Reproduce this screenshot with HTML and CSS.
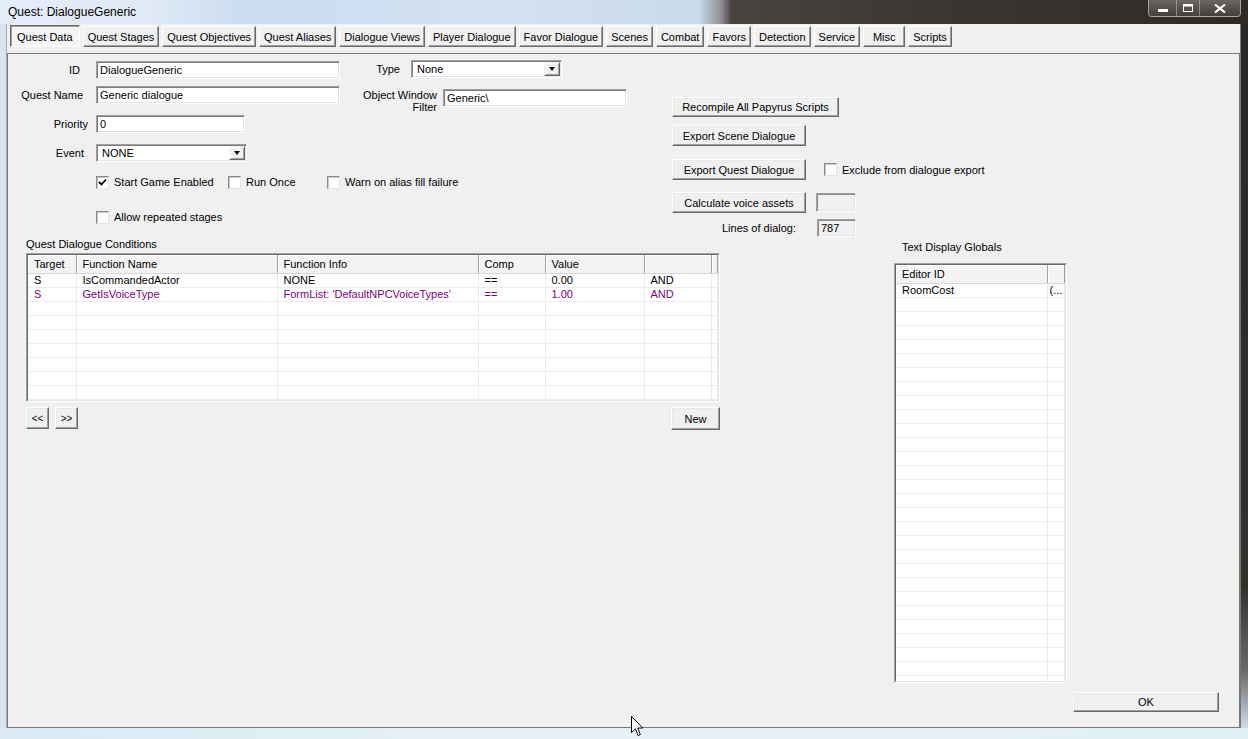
FILE: index.html
```html
<!DOCTYPE html>
<html>
    <head>
        <meta charset="utf-8">
        <link rel="stylesheet" href="styles.css">
    </head>

    <body>
        <div class="window">
            <div class="titlebar">
                <span class="title">Quest: DialogueGeneric</span>
                <div class="caption">
                    <span class="cap cap-min"><svg width="10" height="3"><rect width="10" height="3" fill="#fff"/></svg></span>
                    <span class="cap cap-max"><svg width="10" height="8"><rect x="0.5" y="0.5" width="9" height="7" fill="none" stroke="#fff"/><rect x="0.5" y="0.5" width="9" height="2" fill="#fff"/></svg></span>
                    <span class="cap cap-close"><svg width="12" height="9"><path d="M1 0.5 L11 8.5 M11 0.5 L1 8.5" stroke="#fff" stroke-width="2.2"/></svg></span>
                </div>
            </div>

            <div class="main">
                <div class="edge-left"></div>

                <div class="client">
                    <div class="tabs">
                        <span class="tab selected">Quest Data</span>
                        <span class="tab">Quest Stages</span>
                        <span class="tab">Quest Objectives</span>
                        <span class="tab">Quest Aliases</span>
                        <span class="tab">Dialogue Views</span>
                        <span class="tab">Player Dialogue</span>
                        <span class="tab">Favor Dialogue</span>
                        <span class="tab">Scenes</span>
                        <span class="tab">Combat</span>
                        <span class="tab">Favors</span>
                        <span class="tab">Detection</span>
                        <span class="tab">Service</span>
                        <span class="tab">Misc</span>
                        <span class="tab">Scripts</span>
                    </div>

                    <div class="panel">
                        <div class="top">
                            <div class="form">
                                <div class="fields">
                                    <div class="col-main">
                                        <div class="field">
                                            <span class="lbl lbl-id">ID</span>
                                            <span class="edit w-long">DialogueGeneric</span>
                                        </div>
                                        <div class="field f-name">
                                            <span class="lbl lbl-name">Quest Name</span>
                                            <span class="edit w-long">Generic dialogue</span>
                                        </div>
                                        <div class="field f-gap">
                                            <span class="lbl lbl-priority">Priority</span>
                                            <span class="edit w-short">0</span>
                                        </div>
                                        <div class="field f-gap">
                                            <span class="lbl">Event</span>
                                            <span class="edit combo w-combo"><span class="combo-text">NONE</span><span class="drop"></span></span>
                                        </div>
                                    </div>

                                    <div class="col-side">
                                        <div class="field">
                                            <span class="lbl lbl-type">Type</span>
                                            <span class="edit combo w-combo"><span class="combo-text">None</span><span class="drop"></span></span>
                                        </div>
                                        <div class="field f-filter">
                                            <span class="lbl lbl-filter">Object Window<br>Filter</span>
                                            <span class="edit w-filter">Generic\</span>
                                        </div>
                                    </div>
                                </div>

                                <div class="checks checks-first">
                                    <span class="check check-a"><span class="box"><svg width="11" height="11"><path d="M2 5 L4.5 7.5 L9 2.5" fill="none" stroke="#000" stroke-width="1.8"/></svg></span>Start Game Enabled</span>
                                    <span class="check check-b"><span class="box"></span>Run Once</span>
                                    <span class="check"><span class="box"></span>Warn on alias fill failure</span>
                                </div>
                                <div class="checks checks-second">
                                    <span class="check"><span class="box"></span>Allow repeated stages</span>
                                </div>
                            </div>

                            <div class="actions">
                                <span class="btn b-recompile">Recompile All Papyrus Scripts</span>
                                <div class="act-row act-scene">
                                    <span class="btn b-export">Export Scene Dialogue</span>
                                </div>
                                <div class="act-row act-quest">
                                    <span class="btn b-export">Export Quest Dialogue</span>
                                    <span class="check check-exclude"><span class="box"></span>Exclude from dialogue export</span>
                                </div>
                                <div class="act-row act-calc">
                                    <span class="btn b-export">Calculate voice assets</span>
                                    <span class="readonly ro-calc"></span>
                                </div>
                                <div class="act-row act-lines">
                                    <span class="lines-label">Lines of dialog:</span>
                                    <span class="readonly ro-lines">787</span>
                                </div>
                            </div>
                        </div>

                        <div class="bottom">
                            <div class="conditions">
                                <div class="cond-label">Quest Dialogue Conditions</div>
                                <div class="list cond-list">
                                    <div class="list-inner">
                                        <table class="grid">
                                            <colgroup>
                                                <col class="c-target"><col class="c-name"><col class="c-info"><col class="c-comp"><col class="c-value"><col class="c-op"><col>
                                            </colgroup>
                                            <tr>
                                                <th>Target</th><th>Function Name</th><th>Function Info</th><th>Comp</th><th>Value</th><th></th><th></th>
                                            </tr>
                                            <tr>
                                                <td>S</td><td>IsCommandedActor</td><td>NONE</td><td>==</td><td>0.00</td><td>AND</td><td></td>
                                            </tr>
                                            <tr class="flagged">
                                                <td>S</td><td>GetIsVoiceType</td><td>FormList: 'DefaultNPCVoiceTypes'</td><td>==</td><td>1.00</td><td>AND</td><td></td>
                                            </tr>
                                            <tr><td></td><td></td><td></td><td></td><td></td><td></td><td></td></tr>
                                            <tr><td></td><td></td><td></td><td></td><td></td><td></td><td></td></tr>
                                            <tr><td></td><td></td><td></td><td></td><td></td><td></td><td></td></tr>
                                            <tr><td></td><td></td><td></td><td></td><td></td><td></td><td></td></tr>
                                            <tr><td></td><td></td><td></td><td></td><td></td><td></td><td></td></tr>
                                            <tr><td></td><td></td><td></td><td></td><td></td><td></td><td></td></tr>
                                            <tr><td></td><td></td><td></td><td></td><td></td><td></td><td></td></tr>
                                        </table>
                                    </div>
                                </div>
                                <div class="nav">
                                    <span class="btn b-nav">&lt;&lt;</span>
                                    <span class="btn b-nav b-next">&gt;&gt;</span>
                                    <span class="btn b-new">New</span>
                                </div>
                            </div>

                            <div class="globals">
                                <div class="glob-label">Text Display Globals</div>
                                <div class="list glob-list">
                                    <div class="list-inner">
                                        <table class="grid">
                                            <colgroup>
                                                <col class="c-editor"><col>
                                            </colgroup>
                                            <tr><th>Editor ID</th><th></th></tr>
                                            <tr><td>RoomCost</td><td class="clip">(...</td></tr>
                                            <tr><td></td><td></td></tr>
                                            <tr><td></td><td></td></tr>
                                            <tr><td></td><td></td></tr>
                                            <tr><td></td><td></td></tr>
                                            <tr><td></td><td></td></tr>
                                            <tr><td></td><td></td></tr>
                                            <tr><td></td><td></td></tr>
                                            <tr><td></td><td></td></tr>
                                            <tr><td></td><td></td></tr>
                                            <tr><td></td><td></td></tr>
                                            <tr><td></td><td></td></tr>
                                            <tr><td></td><td></td></tr>
                                            <tr><td></td><td></td></tr>
                                            <tr><td></td><td></td></tr>
                                            <tr><td></td><td></td></tr>
                                            <tr><td></td><td></td></tr>
                                            <tr><td></td><td></td></tr>
                                            <tr><td></td><td></td></tr>
                                            <tr><td></td><td></td></tr>
                                            <tr><td></td><td></td></tr>
                                            <tr><td></td><td></td></tr>
                                            <tr><td></td><td></td></tr>
                                            <tr><td></td><td></td></tr>
                                            <tr><td></td><td></td></tr>
                                            <tr><td></td><td></td></tr>
                                            <tr><td></td><td></td></tr>
                                            <tr><td></td><td></td></tr>
                                            <tr><td></td><td></td></tr>
                                        </table>
                                    </div>
                                </div>
                            </div>
                        </div>

                        <div class="footer">
                            <span class="btn b-ok">OK</span>
                        </div>
                    </div>
                </div>

                <div class="edge-right"></div>
            </div>

            <div class="edge-bottom"></div>

            <svg class="cursor" width="13" height="21" viewBox="0 0 13 21">
                <path d="M0.5 0.5 L0.5 16.5 L4.5 12.8 L7 19.5 L9.3 18.6 L6.8 12 L11.8 12 Z" fill="#fff" stroke="#000" stroke-width="1"/>
            </svg>
        </div>
    </body>
</html>
```

FILE: styles.css
```css
* {
    box-sizing: border-box;
}

body {
    margin: 0;
    width: 1248px;
    height: 739px;
    overflow: hidden;
    font-family: "Liberation Sans", Arial, sans-serif;
    font-size: 11px;
    color: #000;
    background: #d9e7f2;
}

.window {
    position: relative;
    width: 1248px;
    height: 739px;
    display: flex;
    flex-direction: column;
}

/* title bar (aero glass) */

.titlebar {
    height: 24px;
    flex: none;
    display: flex;
    justify-content: space-between;
    align-items: flex-start;
    background: linear-gradient(90deg, #e4edf7 0, #dfeaf6 12%, #cadcf0 20%, #d3e2f2 40%, #c9daec 56%, #8e8f92 57.8%, #4a4441 58.6%, #3c3633 75%, #2e2927 100%);
}

.title {
    font-size: 12px;
    line-height: 14px;
    padding: 5px 0 0 8px;
}

.caption {
    display: flex;
    height: 17px;
    margin-right: 7px;
    border: 1px solid rgba(255, 255, 255, 0.45);
    border-top: 0;
    border-radius: 0 0 4px 4px;
    overflow: hidden;
    background: linear-gradient(#6a6462, #45403e);
}

.cap {
    display: flex;
    align-items: center;
    justify-content: center;
    border-left: 1px solid rgba(255, 255, 255, 0.35);
}

.cap-min {
    width: 27px;
    border-left: 0;
    padding-top: 4px;
}

.cap-max {
    width: 23px;
}

.cap-close {
    width: 41px;
}

/* frame */

.main {
    display: flex;
    height: 704px;
    flex: none;
}

.edge-left {
    width: 7px;
    background: #d7e5f1;
    border-right: 1px solid #9eabb8;
}

.edge-right {
    width: 8px;
    background: linear-gradient(180deg, #2b2725 0, #36302d 80%, #6d6a69 92%, #cfdde8 100%);
    border-left: 1px solid #777;
}

.edge-bottom {
    flex: 1;
    background: linear-gradient(90deg, #dce9f3 0, #e6f1f7 40%, #e3eff6 100%);
}

.client {
    width: 1233px;
    background: #f0f0f0;
    display: flex;
    flex-direction: column;
}

/* tabs */

.tabs {
    height: 29px;
    flex: none;
    display: flex;
    gap: 3px;
    padding: 2px 0 0 3px;
}

.tab {
    height: 21px;
    min-width: 42px;
    padding: 0 4px;
    display: flex;
    align-items: center;
    justify-content: center;
    white-space: nowrap;
    border: 1px solid;
    border-color: #fff #696969 #696969 #fff;
    box-shadow: inset -1px -1px 0 #a0a0a0;
}

.tab.selected {
    height: 22px;
    margin-top: -1px;
    padding: 2px 6px 0;
    border-color: #696969 #fff #fff #696969;
    box-shadow: inset 1px 1px 0 #a0a0a0;
    background: #f4f4f4;
}

/* panel */

.panel {
    flex: 1;
    border: 1px solid #7a7a7a;
    display: flex;
    flex-direction: column;
}

.top {
    height: 183px;
    flex: none;
    display: flex;
}

.form {
    width: 664px;
    display: flex;
    flex-direction: column;
}

.fields {
    display: flex;
}

.col-main {
    width: 332px;
    padding-top: 7px;
    display: flex;
    flex-direction: column;
}

.col-side {
    padding-top: 6px;
    display: flex;
    flex-direction: column;
}

.field {
    display: flex;
    align-items: center;
    height: 18px;
}

.f-name {
    margin-top: 7px;
}

.f-gap {
    margin-top: 11px;
}

.lbl {
    flex: none;
    width: 76px;
    margin-right: 12px;
    text-align: right;
    white-space: nowrap;
}

.lbl-id {
    width: 72px;
    margin-right: 16px;
}

.lbl-name {
    width: 75px;
    margin-right: 13px;
}

.lbl-priority {
    width: 80px;
    margin-right: 8px;
}

.lbl-type {
    width: 60px;
    margin-right: 11px;
}

.f-filter {
    margin-top: 11px;
    height: auto;
    align-items: flex-start;
}

.lbl-filter {
    width: 97px;
    margin-right: 6px;
    line-height: 12px;
}

/* edit boxes */

.edit {
    height: 18px;
    display: flex;
    align-items: center;
    padding: 0 3px;
    background: #fff;
    border: 1px solid;
    border-color: #a0a0a0 #fff #fff #a0a0a0;
    box-shadow: inset 1px 1px 0 #7c7c7c, inset -1px -1px 0 #e3e3e3;
    white-space: nowrap;
}

.w-long {
    width: 244px;
}

.w-short {
    width: 149px;
}

.w-combo {
    width: 151px;
}

.w-filter {
    width: 184px;
}

.combo {
    padding: 0 1px 0 5px;
}

.combo-text {
    flex: 1;
}

.drop {
    width: 16px;
    height: 14px;
    display: flex;
    align-items: center;
    justify-content: center;
    background: #f0f0f0;
    border: 1px solid;
    border-color: #f0f0f0 #696969 #696969 #f0f0f0;
    box-shadow: inset 1px 1px 0 #fff, inset -1px -1px 0 #a0a0a0;
}

.drop::after {
    content: "";
    border-left: 3.5px solid transparent;
    border-right: 3.5px solid transparent;
    border-top: 4px solid #000;
}

/* check boxes */

.checks {
    display: flex;
    align-items: center;
    height: 14px;
    padding-left: 88px;
}

.checks-first {
    margin-top: 13px;
}

.checks-second {
    margin-top: 21px;
}

.check {
    display: flex;
    align-items: center;
    white-space: nowrap;
}

.check-a {
    width: 132px;
}

.check-b {
    width: 99px;
}

.box {
    width: 13px;
    height: 13px;
    margin-right: 5px;
    display: flex;
    align-items: center;
    justify-content: center;
    background: #fff;
    border: 1px solid;
    border-color: #8a8a8a #e3e3e3 #e3e3e3 #8a8a8a;
    box-shadow: inset 1px 1px 0 #c8c8c8;
}

/* buttons */

.btn {
    display: flex;
    align-items: center;
    justify-content: center;
    white-space: nowrap;
    background: #f0f0f0;
    border: 1px solid;
    border-color: #fff #696969 #696969 #fff;
    box-shadow: inset -1px -1px 0 #a0a0a0, inset 1px 1px 0 #e9e9e9;
}

.actions {
    display: flex;
    flex-direction: column;
    align-items: flex-start;
    padding-top: 43px;
}

.b-recompile {
    width: 167px;
    height: 21px;
}

.b-export {
    width: 134px;
    height: 21px;
}

.act-row {
    display: flex;
    align-items: center;
}

.act-scene {
    margin-top: 8px;
}

.act-quest {
    margin-top: 13px;
}

.act-calc {
    margin-top: 12px;
}

.act-lines {
    margin-top: 6px;
}

.check-exclude {
    margin-left: 18px;
}

.readonly {
    display: flex;
    align-items: center;
    padding-left: 3px;
    background: #f0f0f0;
    border: 1px solid;
    border-color: #a0a0a0 #fff #fff #a0a0a0;
    box-shadow: inset 1px 1px 0 #8a8a8a, inset -1px -1px 0 #e3e3e3;
}

.ro-calc {
    width: 40px;
    height: 19px;
    margin-left: 10px;
}

.lines-label {
    width: 124px;
    margin-right: 21px;
    text-align: right;
}

.ro-lines {
    width: 39px;
    height: 18px;
}

/* lists */

.bottom {
    display: flex;
}

.conditions {
    width: 694px;
    margin-left: 18px;
}

.cond-label {
    line-height: 14px;
}

.list {
    margin-top: 2px;
    background: #fff;
    border: 1px solid;
    border-color: #a0a0a0 #fff #fff #a0a0a0;
    overflow: hidden;
}

.list-inner {
    height: 100%;
    border: 1px solid;
    border-color: #696969 #e3e3e3 #e3e3e3 #696969;
    overflow: hidden;
}

.cond-list {
    height: 149px;
}

.grid {
    width: 100%;
    border-collapse: collapse;
    table-layout: fixed;
}

.grid th {
    height: 18px;
    padding: 0 6px;
    font-weight: normal;
    text-align: left;
    white-space: nowrap;
    background: #f3f3f3;
    border-right: 1px solid #a0a0a0;
    border-bottom: 1px solid #d8d8d8;
    box-shadow: inset 1px 1px 0 #fff;
}

.grid td {
    height: 14px;
    padding: 0 6px;
    line-height: 13px;
    white-space: nowrap;
    overflow: hidden;
    border-right: 1px solid #ececec;
    border-bottom: 1px solid #ececec;
}

.grid .flagged td {
    color: #800080;
}

.c-target {
    width: 48px;
}

.c-name {
    width: 201px;
}

.c-info {
    width: 201px;
}

.c-comp {
    width: 67px;
}

.c-value {
    width: 99px;
}

.c-op {
    width: 67px;
}

.c-editor {
    width: 151px;
}

.grid td.clip {
    padding: 0 2px;
}

.nav {
    display: flex;
    margin-top: 5px;
}

.b-nav {
    width: 23px;
    height: 22px;
    font-size: 10px;
}

.b-next {
    margin-left: 6px;
}

.b-new {
    width: 49px;
    height: 23px;
    margin-left: auto;
}

.globals {
    width: 173px;
    margin-left: 174px;
    padding-top: 3px;
}

.glob-label {
    padding-left: 8px;
    line-height: 14px;
    white-space: nowrap;
}

.glob-list {
    margin-top: 9px;
    height: 420px;
}

.footer {
    display: flex;
    justify-content: flex-end;
    padding-right: 20px;
    margin-top: 9px;
}

.b-ok {
    width: 146px;
    height: 20px;
}

/* mouse pointer over the dialog */

.cursor {
    position: absolute;
    left: 631px;
    top: 716px;
}
```
